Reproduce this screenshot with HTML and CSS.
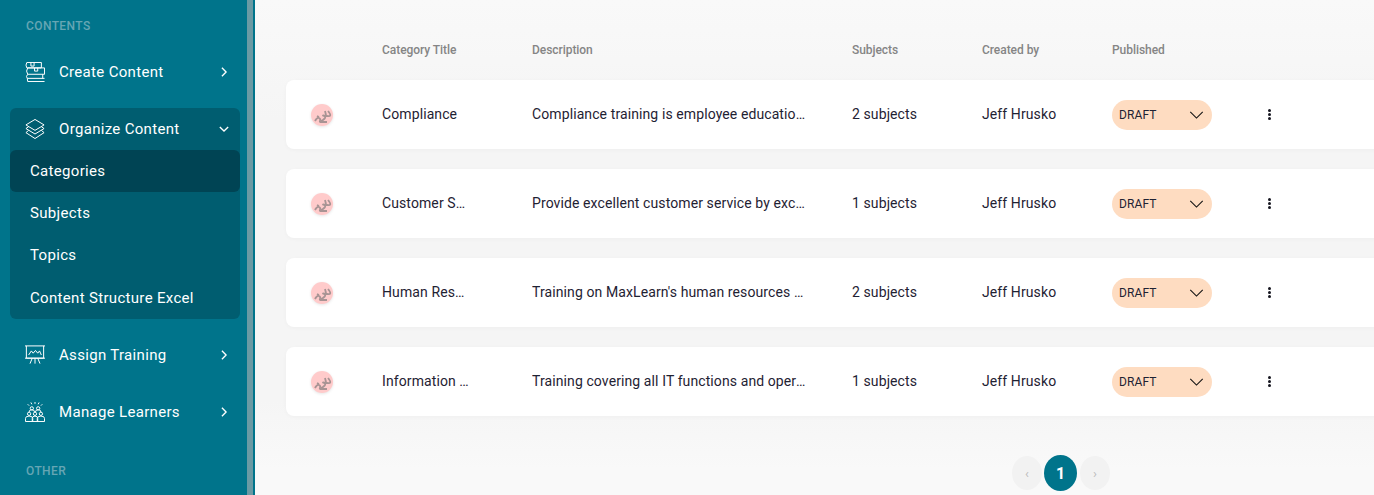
FILE: index.html
```html
<!DOCTYPE html>
<html lang="en">
<head>
  <meta charset="UTF-8">
  <meta name="viewport" content="width=device-width, initial-scale=1.0">
  <title>Categories</title>
  <link rel="stylesheet" href="styles.css">
</head>
<body>
  <aside class="sidebar">
    <nav class="nav">
      <div class="nav-label">CONTENTS</div>
      <a class="nav-item">
        <svg class="nav-icon" viewBox="0 0 22 22"><path d="M2 .5h16v6H2q-1.800-3 0-6zM18 6.500h3.500v7H3q-2.500-3.500 0-7zM3 13.500q-2.500 2.500-.5 4.500L3 21.500h18.500M2.500 18h19M19.500 13.500v4.500M6.500 .5v4h3.500v-4M10.500 6.500v3.500h3.500V6.500"/></svg>
        <span class="nav-text">Create Content</span>
        <svg class="chev" viewBox="0 0 12 12"><path d="M3.500 1l5 5-5 5"/></svg>
      </a>
      <div class="nav-group">
        <a class="nav-item nav-head">
          <svg class="nav-icon" viewBox="0 0 22 22"><path d="M11 .5l10 6-10 6-10-6zM4 8.500l-3 2 10 6 10-6-3-2M4 12.500l-3 2.500 10 6.500 10-6.500-3-2.500"/></svg>
          <span class="nav-text">Organize Content</span>
          <svg class="chev" viewBox="0 0 12 12"><path d="M1 3.500l5 5 5-5"/></svg>
        </a>
        <a class="sub-item sub-active">Categories</a>
        <a class="sub-item">Subjects</a>
        <a class="sub-item">Topics</a>
        <a class="sub-item">Content Structure Excel</a>
      </div>
      <a class="nav-item">
        <svg class="nav-icon" viewBox="0 0 22 22"><path d="M0 1h22M1.500 1v13.500h19V1M0 14.500h22M4 11l3-4.500 2 2.500 2.500-3 2.500 3 2-2.500 2 4.500M5.500 20.500l2.500-6M16.500 20.500l-2.500-6M11 14.500v6"/></svg>
        <span class="nav-text">Assign Training</span>
        <svg class="chev" viewBox="0 0 12 12"><path d="M3.500 1l5 5-5 5"/></svg>
      </a>
      <a class="nav-item">
        <svg class="nav-icon" viewBox="0 0 22 22"><path d="M11 0v2M6.500 .5l1 2M15.500 .5l-1 2M3 2.500l1.500 1.500M19 2.500L17.500 4"/><circle cx="7.500" cy="7" r="1.800"/><circle cx="14.500" cy="7" r="1.800"/><circle cx="4.500" cy="13" r="1.800"/><circle cx="11" cy="13" r="1.800"/><circle cx="17.500" cy="13" r="1.800"/><path d="M4.500 11q0-2.500 3-2.500t3 2.500M11.500 11q0-2.500 3-2.500t3 2.500M.5 21.500V18q0-2.500 4-2.500t4 2.500v3.500M8 21.500V18q0-2.500 3-2.500t3 2.500v3.500M13.500 21.500V18q0-2.500 4-2.500t4 2.500v3.500M.5 21.500h21"/></svg>
        <span class="nav-text">Manage Learners</span>
        <svg class="chev" viewBox="0 0 12 12"><path d="M3.500 1l5 5-5 5"/></svg>
      </a>
      <div class="nav-label nav-label-other">OTHER</div>
    </nav>
    <div class="scroll-thumb"></div>
  </aside>

  <main class="main">
    <div class="table-head">
      <span></span>
      <span>Category Title</span>
      <span>Description</span>
      <span>Subjects</span>
      <span>Created by</span>
      <span>Published</span>
    </div>

    <div class="row">
      <div class="thumb"><svg class="thumb-art" viewBox="0 0 22 22"><path d="M4 17q2-4 4-3t1 3 3-1 1-4 3 0 1-5M6 12l2 1M9 18h7M14 7l1 4"/></svg></div>
      <div class="cell">Compliance</div>
      <div class="cell ellipsis">Compliance training is employee education on laws and policies</div>
      <div class="cell">2 subjects</div>
      <div class="cell">Jeff Hrusko</div>
      <div class="status"><span>DRAFT</span><svg viewBox="0 0 16 9"><path d="M1 1l7 7 7-7"/></svg></div>
      <div class="kebab"><i></i><i></i><i></i></div>
    </div>

    <div class="row">
      <div class="thumb"><svg class="thumb-art" viewBox="0 0 22 22"><path d="M4 17q2-4 4-3t1 3 3-1 1-4 3 0 1-5M6 12l2 1M9 18h7M14 7l1 4"/></svg></div>
      <div class="cell ellipsis">Customer Service</div>
      <div class="cell ellipsis">Provide excellent customer service by exceeding expectations</div>
      <div class="cell">1 subjects</div>
      <div class="cell">Jeff Hrusko</div>
      <div class="status"><span>DRAFT</span><svg viewBox="0 0 16 9"><path d="M1 1l7 7 7-7"/></svg></div>
      <div class="kebab"><i></i><i></i><i></i></div>
    </div>

    <div class="row">
      <div class="thumb"><svg class="thumb-art" viewBox="0 0 22 22"><path d="M4 17q2-4 4-3t1 3 3-1 1-4 3 0 1-5M6 12l2 1M9 18h7M14 7l1 4"/></svg></div>
      <div class="cell ellipsis">Human Resources</div>
      <div class="cell ellipsis">Training on MaxLearn's human resources policies and procedures</div>
      <div class="cell">2 subjects</div>
      <div class="cell">Jeff Hrusko</div>
      <div class="status"><span>DRAFT</span><svg viewBox="0 0 16 9"><path d="M1 1l7 7 7-7"/></svg></div>
      <div class="kebab"><i></i><i></i><i></i></div>
    </div>

    <div class="row">
      <div class="thumb"><svg class="thumb-art" viewBox="0 0 22 22"><path d="M4 17q2-4 4-3t1 3 3-1 1-4 3 0 1-5M6 12l2 1M9 18h7M14 7l1 4"/></svg></div>
      <div class="cell ellipsis">Information Technology</div>
      <div class="cell ellipsis">Training covering all IT functions and operations at the company</div>
      <div class="cell">1 subjects</div>
      <div class="cell">Jeff Hrusko</div>
      <div class="status"><span>DRAFT</span><svg viewBox="0 0 16 9"><path d="M1 1l7 7 7-7"/></svg></div>
      <div class="kebab"><i></i><i></i><i></i></div>
    </div>

    <div class="pager">
      <button class="page-btn">‹</button>
      <button class="page-btn page-current">1</button>
      <button class="page-btn">›</button>
    </div>
  </main>
</body>
</html>
```

FILE: styles.css
```css
html, body {
  height: 100%;
  margin: 0;
  padding: 0;
  overflow: hidden;
}
body {
  display: flex;
  font-family: Roboto, "Liberation Sans", sans-serif;
  background: linear-gradient(#f9f9f9 0, #f5f5f5 120px, #f5f5f5 400px, #f9f9f9 470px);
  color: #1f2233;
}

/* sidebar */
.sidebar {
  width: 255px;
  flex-shrink: 0;
  height: 495px;
  display: flex;
  background: #00748b;
  overflow: hidden;
}
.nav {
  width: 247px;
  flex-shrink: 0;
}
.scroll-thumb {
  width: 6px;
  height: 100%;
  background: #6a9aa4;
}
.nav-label {
  padding: 19px 0 0 26px;
  height: 15px;
  line-height: 15px;
  font-size: 12px;
  font-weight: 500;
  letter-spacing: .4px;
  color: #66a6b4;
  margin-bottom: 17px;
}
.nav-label-other {
  padding-top: 16px;
  margin: 0;
}
.nav-item {
  display: flex;
  align-items: center;
  height: 42px;
  margin: 0 7px 15px 10px;
  padding: 0 11px 0 15px;
  color: #fff;
  font-size: 15px;
  letter-spacing: .32px;
}
.nav-icon {
  width: 20px;
  height: 20px;
  margin-right: 14px;
  fill: none;
  stroke: #fff;
  stroke-width: 1.100;
}
.nav-text {
  flex: 1;
}
.chev {
  width: 10px;
  height: 10px;
  fill: none;
  stroke: #fff;
  stroke-width: 1.600;
}
.nav-group {
  margin: 0 7px 15px 10px;
  background: #005d70;
  border-radius: 6px;
  height: 211px;
}
.nav-head {
  margin: 0;
}
.sub-item {
  display: flex;
  align-items: center;
  height: 42px;
  padding-left: 20px;
  color: #fff;
  font-size: 15px;
  letter-spacing: .32px;
}
.sub-item:last-child {
  height: 43px;
}
.sub-active {
  background: #004454;
  border-radius: 6px;
}

/* main table */
.main {
  flex: 1;
  min-width: 0;
  padding-left: 31px;
  overflow: hidden;
}
.table-head, .row {
  display: grid;
  grid-template-columns: 72px 150px 320px 130px 130px 156px 40px;
  align-items: center;
  padding-left: 24px;
  width: 1100px;
}
.table-head {
  height: 80px;
  padding-top: 20px;
  box-sizing: border-box;
  font-size: 12px;
  font-weight: 500;
  letter-spacing: -.05px;
  color: #858585;
}
.row {
  height: 69px;
  margin-bottom: 20px;
  background: #fff;
  border-radius: 8px;
  font-size: 14px;
  letter-spacing: .1px;
  box-shadow: 0 1px 4px rgba(0, 0, 0, .03);
}
.cell {
  padding-bottom: 2px;
}
.ellipsis {
  overflow: hidden;
  white-space: nowrap;
  text-overflow: ellipsis;
}
.row > .ellipsis:nth-child(2) {
  max-width: 87px;
}
.row > .ellipsis:nth-child(3) {
  max-width: 276px;
}
.thumb {
  width: 22px;
  height: 22px;
  margin-left: 1px;
  border-radius: 50%;
  background: #ffcbcb;
  box-shadow: 0 1px 3px rgba(0, 0, 0, .1);
}
.thumb-art {
  display: block;
  fill: none;
  stroke: #a89494;
  stroke-width: 1.800;
  filter: blur(.6px);
}
.status {
  width: 100px;
  height: 30px;
  padding: 0 8px 0 7px;
  box-sizing: border-box;
  display: flex;
  align-items: center;
  justify-content: space-between;
  border-radius: 15px;
  background: #fedcc1;
  font-size: 12px;
}
.status svg {
  width: 15px;
  height: 8px;
  fill: none;
  stroke: #111;
  stroke-width: 1.200;
}
.kebab {
  display: flex;
  flex-direction: column;
  gap: 1px;
}
.kebab i {
  width: 3px;
  height: 3px;
  border-radius: 50%;
  background: #15151f;
}

/* pagination */
.pager {
  display: flex;
  gap: 2px;
  align-items: center;
  margin: 39px 0 0 726px;
}
.page-btn {
  width: 30px;
  height: 34px;
  border: 0;
  padding: 0;
  border-radius: 50%;
  background: #f2f2f2;
  color: #bbb;
  font-family: inherit;
  font-size: 13px;
}
.page-current {
  width: 33px;
  height: 36px;
  margin-right: 1px;
  background: #00748b;
  color: #fff;
  font-size: 16px;
  font-weight: 700;
}
```
